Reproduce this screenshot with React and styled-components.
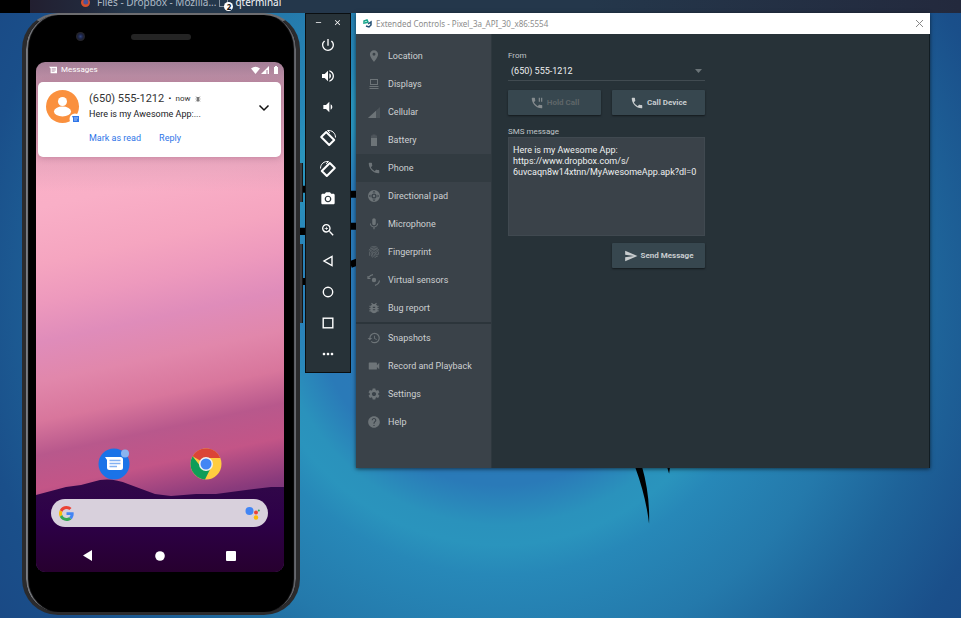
import React from "react";
import styled, { createGlobalStyle, css } from "styled-components";
import {
  MdPowerSettingsNew, MdVolumeUp, MdVolumeDown, MdPhotoCamera, MdZoomIn, MdMoreHoriz,
  MdLocationOn, MdPhone, MdMic, MdFingerprint, MdBugReport, MdHistory,
  MdVideocam, MdSettings, MdHelp, MdPhonePaused, MdSend, MdClose, MdRemove,
} from "react-icons/md";

const GlobalStyle = createGlobalStyle`
  *, *::before, *::after { box-sizing: border-box; }
  html, body { margin: 0; height: 100%; }
  body { background: #1b5088; font-family: Roboto, "Liberation Sans", sans-serif; }
  button, input, textarea, select { font: inherit; color: inherit; }
  button { border: 0; padding: 0; background: none; cursor: pointer; }
  ul { list-style: none; margin: 0; padding: 0; }
  h1, p { margin: 0; font: inherit; }
`;

/* ---------- desktop ---------- */

const Desktop = styled.div`
  position: relative;
  min-height: 100vh;
  overflow: hidden;
  display: flex;
  flex-direction: column;
  background:
    radial-gradient(circle at 500px 300px, #2b78b8 0, #2a7ab8 185px, #2a92bc 225px, #2a94bd 245px, #2788b8 275px, #2479ab 360px, #1e6399 440px, #1a4f8a 530px, #1a4682 640px);
`;

const Wallpaper = styled.svg`
  position: absolute;
  inset: 0;
  width: 100%;
  height: 100%;
`;

const TaskBar = styled.header`
  position: relative;
  display: flex;
  align-items: flex-end;
  height: 13px;
  padding-bottom: 1px;
  overflow: hidden;
  border-left: 30px solid #000;
  background: linear-gradient(90deg, #221f30 0, #22283b 50px, #24374b 100px, #24374b 60%, #23293d);
`;

const TaskButton = styled.button`
  display: flex;
  align-items: center;
  gap: ${(p) => (p.$active ? 2 : 7)}px;
  margin-left: ${(p) => p.$offset}px;
  height: 19px;
  color: ${(p) => (p.$active ? "#f4f6f8" : "#aebac6")};
  font: 10px/19px "Noto Sans", sans-serif;
  white-space: nowrap;
`;

const TaskCount = styled.span`
  display: flex;
  align-items: center;
  justify-content: center;
  width: 9px;
  height: 9px;
  margin: 8px 0 0 -6px;
  border-radius: 50%;
  background: #fff;
  color: #111;
  font: 700 8px/9px "Noto Sans", sans-serif;
`;

const Windows = styled.main`
  position: relative;
  flex: 1;
  display: flex;
  align-items: flex-start;
  padding: 0 31px 4px 22px;
`;

/* ---------- phone ---------- */

const PhoneBody = styled.section`
  position: relative;
  flex: none;
  display: flex;
  flex-direction: column;
  width: 278px;
  padding: 0 10px 40px 10px;
  border: 4px solid #2b2b2d;
  border-top: 2px solid #6d6d70;
  border-bottom-width: 3px;
  border-radius: 36px;
  background: #000;
  box-shadow: inset 3px 0 1px -1px #7b7d83, inset -4px 0 1px -2px #66686e;
`;

const SideKey = styled.span`
  position: absolute;
  left: 274px;
  top: ${(p) => p.$top}px;
  width: 3px;
  height: ${(p) => p.$length}px;
  background: #3b3c3e;
  border-right: 1px solid #151515;
`;

const PhoneTop = styled.div`
  display: flex;
  align-items: flex-start;
  height: 47px;
  padding: 17px 0 0 40px;
`;

const Lens = styled.span`
  width: 9px;
  height: 9px;
  border-radius: 50%;
  background: radial-gradient(circle, #31447c 0, #1a2140 40%, #24242a 60%);
`;

const Speaker = styled.span`
  width: 60px;
  height: 6px;
  margin: 2px 0 0 46px;
  border-radius: 3px;
  background: #242424;
`;

const Screen = styled.div`
  position: relative;
  display: flex;
  flex-direction: column;
  height: 510px;
  width: 248px;
  border-radius: 9px;
  overflow: hidden;
  background:
    linear-gradient(180deg, rgba(125, 105, 130, .7) 0, rgba(125, 105, 130, .45) 22px, transparent 130px),
    linear-gradient(168deg, #ffb3c8 0, #f9afc7 26%, #f5a5c0 36%, #ed99bd 43%, #df8cba 50%, #e187ab 57%, #d8769c 64%, #b8588c 70%, #c35587 76%, #8b3b7c 83%, #5b2b77 90%);
`;

const Hills = styled.svg`
  position: absolute;
  left: 0;
  bottom: 0;
  width: 100%;
  height: 100px;
`;

const StatusBar = styled.div`
  display: flex;
  align-items: center;
  height: 16px;
  padding: 0 4px 0 13px;
  gap: 4px;
  color: #fff;
  font-size: 8px;
  line-height: 16px;
`;

const StatusIcons = styled.span`
  display: flex;
  align-items: center;
  margin-left: auto;
`;

const Notification = styled.article`
  position: relative;
  display: flex;
  margin: 4px 3px 0 2px;
  height: 75px;
  padding: 8px;
  border-radius: 5px;
  background: #fff;
  color: #202124;
  box-shadow: 0 1px 6px rgba(90, 40, 70, .25);
`;

const Avatar = styled.svg`
  flex: none;
  width: 34px;
  height: 34px;
`;

const NotificationText = styled.div`
  flex: 1;
  margin-left: 9px;
  font-size: 9px;
  line-height: 13px;
`;

const Sender = styled.h1`
  display: flex;
  align-items: center;
  gap: 4px;
  font-size: 11px;
  line-height: 18px;
  height: 18px;
  color: #333;
  b { color: #111; }
  small { font-size: 8px; }
`;

const NotificationActions = styled.div`
  display: flex;
  gap: 18px;
  margin-top: 11px;
  color: #2f76e8;
`;

const Expand = styled.button`
  height: 10px;
  margin: 13px 3px 0 0;
  line-height: 0;
`;

const HomeApps = styled.nav`
  position: relative;
  display: flex;
  gap: 58px;
  margin-top: auto;
  padding-left: 62px;
  line-height: 0;
`;

const SearchBar = styled.form`
  position: relative;
  display: flex;
  align-items: center;
  flex: none;
  height: 28px;
  margin: 19px 16px 0 15px;
  padding: 0 8px;
  border-radius: 14px;
  background: #d8d0dc;
  input { flex: 1; min-width: 0; border: 0; outline: 0; background: none; }
`;

const NavKeys = styled.nav`
  position: relative;
  flex: none;
  display: flex;
  align-items: center;
  justify-content: space-between;
  height: 44px;
  padding: 14px 48px 0 47px;
  margin-bottom: 1px;
  line-height: 0;
`;

/* ---------- emulator toolbar ---------- */

const ToolBar = styled.aside`
  flex: none;
  display: flex;
  flex-direction: column;
  width: 46px;
  height: 360px;
  margin-left: 5px;
  padding-bottom: 3px;
  border: 1px solid #0a0e10;
  background: #273238;
  color: #fff;
`;

const ToolCaption = styled.div`
  display: flex;
  justify-content: center;
  gap: 10px;
  height: 16px;
  padding-top: 3px;
  font-size: 9px;
`;

const ToolButton = styled.button`
  display: flex;
  flex: 1;
  align-items: center;
  justify-content: center;
  font-size: 16px;
  color: #fff;
`;

/* ---------- extended controls ---------- */

const ControlsWindow = styled.section`
  flex: 1;
  min-width: 380px;
  display: flex;
  flex-direction: column;
  min-height: 455px;
  margin-left: 5px;
  background: #273238;
  box-shadow: 0 1px 4px rgba(0, 0, 0, .6);
`;

const TitleBar = styled.header`
  display: flex;
  align-items: center;
  gap: 4px;
  height: 21px;
  padding: 0 5px 0 7px;
  background: #fff;
  color: #8c8c8c;
  font: 8px/21px "Noto Sans", sans-serif;
  button { margin-left: auto; line-height: 0; }
`;

const WindowBody = styled.div`
  flex: 1;
  display: flex;
  border-right: 1px solid #111c22;
`;

const SideNav = styled.nav`
  flex: none;
  width: 136px;
  padding-top: 8px;
  background: #3a4249;
  border-right: 1px solid #2e383e;
`;

const NavGroup = styled.ul`
  & + & { border-top: 2px solid #2c353b; }
`;

const NavItem = styled.button`
  display: flex;
  align-items: center;
  gap: 7px;
  width: 100%;
  height: 28px;
  padding-left: 11px;
  font-size: 9px;
  color: #cdd0d2;
  text-align: left;
  svg { flex: none; width: 14px; height: 14px; color: #6d7478; }
  ${(p) => p.$selected && css`background: #323b41;`}
`;

const Panel = styled.form`
  display: flex;
  flex-direction: column;
  width: 197px;
  margin: 16px 0 0 16px;
`;

const FieldLabel = styled.label`
  height: 11px;
  font-size: 8px;
  line-height: 11px;
  color: #c0c5c8;
`;

const NumberField = styled.span`
  display: flex;
  align-items: center;
  height: 20px;
  border-bottom: 1px solid #414b51;
  select {
    appearance: none;
    flex: 1;
    border: 0;
    outline: 0;
    padding: 0 3px;
    background: none;
    color: #eef0f0;
    font-size: 9px;
    line-height: 18px;
  }
`;

const Buttons = styled.div`
  display: grid;
  grid-template-columns: 1fr 1fr;
  gap: 11px;
  margin: 9px 0 11px;
`;

const ActionButton = styled.button`
  display: flex;
  align-items: center;
  justify-content: center;
  gap: 3px;
  height: 25px;
  border-radius: 1px;
  background: #37474f;
  box-shadow: 0 1px 2px rgba(0, 0, 0, .5);
  font-size: 8px;
  font-weight: 700;
  color: #c9cdcf;
  svg { width: 14px; height: 14px; }
  &:disabled { color: #5f6669; }
  &:disabled svg { color: #858b8e; }
`;

const Message = styled.textarea`
  display: block;
  height: 99px;
  padding: 7px 4px;
  resize: none;
  outline: 0;
  border: 1px solid #404950;
  background: #3a4249;
  color: #eef0f0;
  font-size: 9px;
  line-height: 11px;
  overflow: hidden;
`;

const SendRow = styled(Buttons)`
  margin: 7px 0 0;
  button { grid-column: 2; }
`;

/* ---------- drawings ---------- */

const RotateLeft = () => (
  <svg width="18" height="18" viewBox="0 0 18 18" fill="none" stroke="currentColor">
    <path d="M7.2 3 15.2 11 10.2 16 2.2 8Z" strokeWidth="2" strokeLinejoin="round" />
    <path d="M8.5 1.5C13 1 16.5 4 16.5 8.5M8.5 1.5l2.5 2.3" strokeWidth="1" />
  </svg>
);
const RotateRight = () => (
  <svg width="18" height="18" viewBox="0 0 18 18" fill="none" stroke="currentColor">
    <path d="M10.8 3 2.8 11 7.8 16 15.8 8Z" strokeWidth="2" strokeLinejoin="round" />
    <path d="M9.5 1.5C5 1 1.5 4 1.5 8.5M9.5 1.5 7 3.8" strokeWidth="1" />
  </svg>
);
const Back = () => <svg width="12" height="12" viewBox="0 0 12 12" fill="none" stroke="currentColor" strokeWidth="1.4"><path d="M10 1.5v9L2 6Z" /></svg>;
const Home = () => <svg width="12" height="12" viewBox="0 0 12 12" fill="none" stroke="currentColor" strokeWidth="1.4"><circle cx="6" cy="6" r="4.7" /></svg>;
const Overview = () => <svg width="12" height="12" viewBox="0 0 12 12" fill="none" stroke="currentColor" strokeWidth="1.4"><rect x="1.2" y="1.2" width="9.6" height="9.6" /></svg>;
const Displays = () => (
  <svg viewBox="0 0 14 14" fill="none" stroke="currentColor"><rect x="3.5" y="2.5" width="7" height="5" /><path d="M2.500 9.500h9M2.500 11.500h9" /></svg>
);
const Cellular = () => (
  <svg viewBox="0 0 14 14" fill="currentColor"><path d="M13 2v11H1Z" opacity=".35" /><path d="M9 5.7V13H1Z" /></svg>
);
const Battery = () => (
  <svg viewBox="0 0 14 14" fill="currentColor"><path d="M5.500 1.500h3v1H10V5H4V2.500h1.500Z" opacity=".4" /><path d="M4 5h6v8H4Z" /></svg>
);
const DPad = () => (
  <svg viewBox="0 0 14 14">
    <circle cx="7" cy="7" r="4.300" fill="none" stroke="currentColor" strokeWidth="3.400" />
    <g fill="#3a4249"><path d="M7 1.800 8.500 3.500h-3ZM7 12.200 8.500 10.500h-3ZM1.800 7 3.500 5.500v3ZM12.200 7 10.500 5.500v3Z" /></g>
    <circle cx="7" cy="7" r="1.200" fill="currentColor" />
  </svg>
);
const Sensors = () => (
  <svg viewBox="0 0 14 14" fill="none" stroke="currentColor"><circle cx="7" cy="7" r="2.200" fill="currentColor" stroke="none" /><path d="M1.700 4.500A6 6 0 0 1 6 1.700M12.500 7.500A6 6 0 0 1 8 12.300M1 3v2.500h2.500" strokeWidth="1.200" /></svg>
);
const Bubble = ({ size }) => (
  <svg width={size} height={size} viewBox="0 0 10 10"><path d="M0 1h10v8H2V3Z" fill="currentColor" /><path d="M3.4 3.4H8.5M3.4 5H8.5M3.4 6.6H7" stroke="#a77a98" strokeWidth=".8" /></svg>
);

const MessagesIcon = () => (
  <svg width="34" height="34" viewBox="0 0 34 34">
    <circle cx="16" cy="18" r="15.5" fill="#1a73e8" />
    <path d="M7 11h15.5q2.500 0 2.500 2.500v8q0 2.500-2.500 2.500h-11Q9 24 9 21.500V14Z" fill="#fff" />
    <path d="M11.500 14.500h11M11.500 17.500h11M11.500 20.500h7.500" stroke="#82b1f3" strokeWidth="1.300" />
    <circle cx="27" cy="7.500" r="4" fill="#8ab4f0" />
  </svg>
);
const ChromeIcon = () => (
  <svg width="34" height="34" viewBox="0 0 34 34">
    <circle cx="16" cy="18" r="15.500" fill="#ffcd40" />
    <path d="M16 18 2.600 10.250A15.500 15.500 0 0 1 30.300 12H16Z" fill="#db4437" />
    <path d="M2.600 10.250A15.500 15.500 0 0 0 15 33.500L21.200 21 16 24 11 21Z" fill="#0f9d58" />
    <circle cx="16" cy="18" r="7" fill="#f1f1f1" /><circle cx="16" cy="18" r="5.500" fill="#4285f4" />
  </svg>
);
const GoogleIcon = () => (
  <svg width="15" height="15" viewBox="0 0 48 48">
    <path fill="#EA4335" d="M24 9.5c3.540 0 6.710 1.220 9.210 3.600l6.850-6.850C35.900 2.380 30.470 0 24 0 14.620 0 6.510 5.380 2.560 13.220l7.980 6.190C12.430 13.720 17.740 9.500 24 9.500z" />
    <path fill="#4285F4" d="M46.980 24.550c0-1.570-.15-3.090-.38-4.550H24v9.020h12.940c-.58 2.960-2.260 5.480-4.780 7.180l7.730 6c4.510-4.180 7.090-10.360 7.090-17.650z" />
    <path fill="#FBBC05" d="M10.530 28.590a14.500 14.500 0 0 1 0-9.180l-7.980-6.190a24 24 0 0 0 0 21.560z" />
    <path fill="#34A853" d="M24 48c6.480 0 11.930-2.130 15.890-5.810l-7.730-6c-2.150 1.450-4.920 2.300-8.160 2.300-6.260 0-11.570-4.220-13.470-9.910l-7.980 6.190C6.510 42.620 14.620 48 24 48z" />
  </svg>
);
const AssistantIcon = () => (
  <svg width="15" height="15" viewBox="0 0 15 15"><circle cx="4.500" cy="5" r="4" fill="#4285f4" /><circle cx="11" cy="6.500" r="2" fill="#ea4335" /><circle cx="11" cy="11.500" r="2.200" fill="#fbbc04" /><circle cx="13.800" cy="4.500" r="1" fill="#34a853" /></svg>
);

const tools = [
  ["Power", MdPowerSettingsNew], ["Volume up", MdVolumeUp], ["Volume down", MdVolumeDown],
  ["Rotate left", RotateLeft], ["Rotate right", RotateRight], ["Take screenshot", MdPhotoCamera],
  ["Zoom", MdZoomIn], ["Back", Back], ["Home", Home], ["Overview", Overview], ["More", MdMoreHoriz],
];

const navGroups = [
  [
    ["Location", MdLocationOn], ["Displays", Displays], ["Cellular", Cellular], ["Battery", Battery],
    ["Phone", MdPhone], ["Directional pad", DPad], ["Microphone", MdMic], ["Fingerprint", MdFingerprint],
    ["Virtual sensors", Sensors], ["Bug report", MdBugReport],
  ],
  [["Snapshots", MdHistory], ["Record and Playback", MdVideocam], ["Settings", MdSettings], ["Help", MdHelp]],
];

const Phone = () => (
  <PhoneBody>
    <SideKey $top={148} $length={39} />
    <SideKey $top={229} $length={79} />
    <PhoneTop><Lens /><Speaker /></PhoneTop>
    <Screen>
      <Hills viewBox="0 0 248 100" preserveAspectRatio="none">
        <defs><linearGradient id="hill" x2="0" y2="1"><stop stopColor="#310849" /><stop offset=".45" stopColor="#2d0048" /><stop offset="1" stopColor="#27002f" /></linearGradient></defs>
        <path d="M0 23 30 15 45 13 64 8Q78 6 92 12L119 22 135 24 160 22 180 22 210 18 235 15 248 15V100H0Z" fill="url(#hill)" />
      </Hills>
      <StatusBar>
        <Bubble size={8} /> Messages
        <StatusIcons>
          <svg width="29" height="9" viewBox="0 0 29 9" fill="#fff"><path d="M0 2.500Q4.500-1 9 2.500L4.500 8Z" /><path d="M18 0v8h-8Z" /><path d="M16 4v4" stroke="#a77a98" /><path d="M23 1h1V0h2v1h1v7h-4Z" /></svg>
        </StatusIcons>
      </StatusBar>
      <Notification>
        <Avatar viewBox="0 0 34 34">
          <circle cx="16.500" cy="16.500" r="16.500" fill="#fa903e" /><circle cx="16.500" cy="11.500" r="4.500" fill="#fff" /><ellipse cx="16.500" cy="21.500" rx="8.500" ry="5" fill="#fff" />
          <circle cx="29" cy="29" r="5.500" fill="#fff" /><path d="M26 26h7v6h-6v-4Z" fill="#2f76e8" /><path d="M28 28h4M28 30h3" stroke="#fff" strokeWidth=".6" />
        </Avatar>
        <NotificationText>
          <Sender>(650) 555-1212 <b>·</b> <small>now</small>
            <svg width="6" height="6" viewBox="0 0 6 6" stroke="#777" fill="none"><path d="M1 .5 2 2M5 .5 4 2M.5 3h5M1 5.500 2 4M5 5.500 4 4" strokeWidth=".7" /><path d="M3 1v4.500" strokeWidth="2" /></svg>
          </Sender>
          <p>Here is my Awesome App:...</p>
          <NotificationActions><button type="button">Mark as read</button><button type="button">Reply</button></NotificationActions>
        </NotificationText>
        <Expand aria-label="Expand"><svg width="12" height="8" viewBox="0 0 12 8" fill="none" stroke="#111" strokeWidth="1.500"><path d="M1.500 1.500 6 6l4.500-4.500" /></svg></Expand>
      </Notification>
      <HomeApps>
        <button aria-label="Messages"><MessagesIcon /></button>
        <button aria-label="Chrome"><ChromeIcon /></button>
      </HomeApps>
      <SearchBar><GoogleIcon /><input aria-label="Search" /><AssistantIcon /></SearchBar>
      <NavKeys>
        <button aria-label="Back"><svg width="10" height="12" viewBox="0 0 10 12" fill="#fff"><path d="M9 0v11L0 5.500Z" /></svg></button>
        <button aria-label="Home"><svg width="10" height="10" viewBox="0 0 10 10" fill="#fff"><circle cx="5" cy="5" r="4.800" /></svg></button>
        <button aria-label="Overview"><svg width="10" height="10" viewBox="0 0 10 10" fill="#fff"><rect width="10" height="10" rx="1" /></svg></button>
      </NavKeys>
    </Screen>
  </PhoneBody>
);

export default function App() {
  return (
    <Desktop>
      <GlobalStyle />
      <Wallpaper viewBox="0 0 961 618" preserveAspectRatio="xMinYMin slice">
        <path d="M298 189h10M298 231h10M298 281h10M350 194h8M350 226h8M350 264l8-3" stroke="#000" strokeWidth="7" />
        <path d="M634 466h7Q649 494 648 523 645 496 634 466ZM666 466h3l-1 7Z" fill="#000" />
      </Wallpaper>
      <TaskBar>
        <TaskButton $offset={51}>
          <svg width="9" height="9" viewBox="0 0 9 9"><circle cx="4.500" cy="4.500" r="4.500" fill="#d4502d" /><circle cx="4.800" cy="4" r="2.500" fill="#4b5299" /></svg>
          Files - Dropbox - Mozilla...
        </TaskButton>
        <TaskButton $offset={3} $active>
          <svg width="9" height="9" viewBox="0 0 9 9" fill="none" stroke="#8793a0"><rect x=".5" y=".5" width="8" height="8" /></svg>
          <TaskCount>2</TaskCount>qterminal
        </TaskButton>
      </TaskBar>
      <Windows>
        <Phone />
        <ToolBar>
          <ToolCaption><button aria-label="Minimize"><MdRemove /></button><button aria-label="Close"><MdClose /></button></ToolCaption>
          {tools.map(([name, Icon]) => <ToolButton key={name} aria-label={name}><Icon /></ToolButton>)}
        </ToolBar>
        <ControlsWindow>
          <TitleBar>
            <svg width="9" height="9" viewBox="0 0 9 9" fill="none" strokeWidth="1.500"><path d="M1 5V2l3-1 1 2-3 1" stroke="#16a58b" /><path d="m3 7 3 1 2-2V3L5 5" stroke="#245075" /></svg>
            Extended Controls - Pixel_3a_API_30_x86:5554
            <button aria-label="Close window"><svg width="11" height="11" viewBox="0 0 11 11" stroke="#888"><path d="m2 2 7 7M9 2 2 9" /></svg></button>
          </TitleBar>
          <WindowBody>
            <SideNav>
              {navGroups.map((group, i) => (
                <NavGroup key={i}>
                  {group.map(([name, Icon]) => (
                    <li key={name}><NavItem $selected={name === "Phone"}><Icon />{name}</NavItem></li>
                  ))}
                </NavGroup>
              ))}
            </SideNav>
            <Panel onSubmit={(e) => e.preventDefault()}>
              <FieldLabel htmlFor="from">From</FieldLabel>
              <NumberField>
                <select id="from" defaultValue="a"><option value="a">(650) 555-1212</option></select>
                <svg width="12" height="6" viewBox="0 0 12 6" fill="#6b7478"><path d="M2 1h7L5.500 5Z" /></svg>
              </NumberField>
              <Buttons>
                <ActionButton type="button" disabled><MdPhonePaused />Hold Call</ActionButton>
                <ActionButton type="button"><MdPhone />Call Device</ActionButton>
              </Buttons>
              <FieldLabel htmlFor="sms">SMS message</FieldLabel>
              <Message id="sms" defaultValue={"Here is my Awesome App:\nhttps://www.dropbox.com/s/\n6uvcaqn8w14xtnn/MyAwesomeApp.apk?dl=0"} />
              <SendRow><ActionButton type="submit"><MdSend />Send Message</ActionButton></SendRow>
            </Panel>
          </WindowBody>
        </ControlsWindow>
      </Windows>
    </Desktop>
  );
}
